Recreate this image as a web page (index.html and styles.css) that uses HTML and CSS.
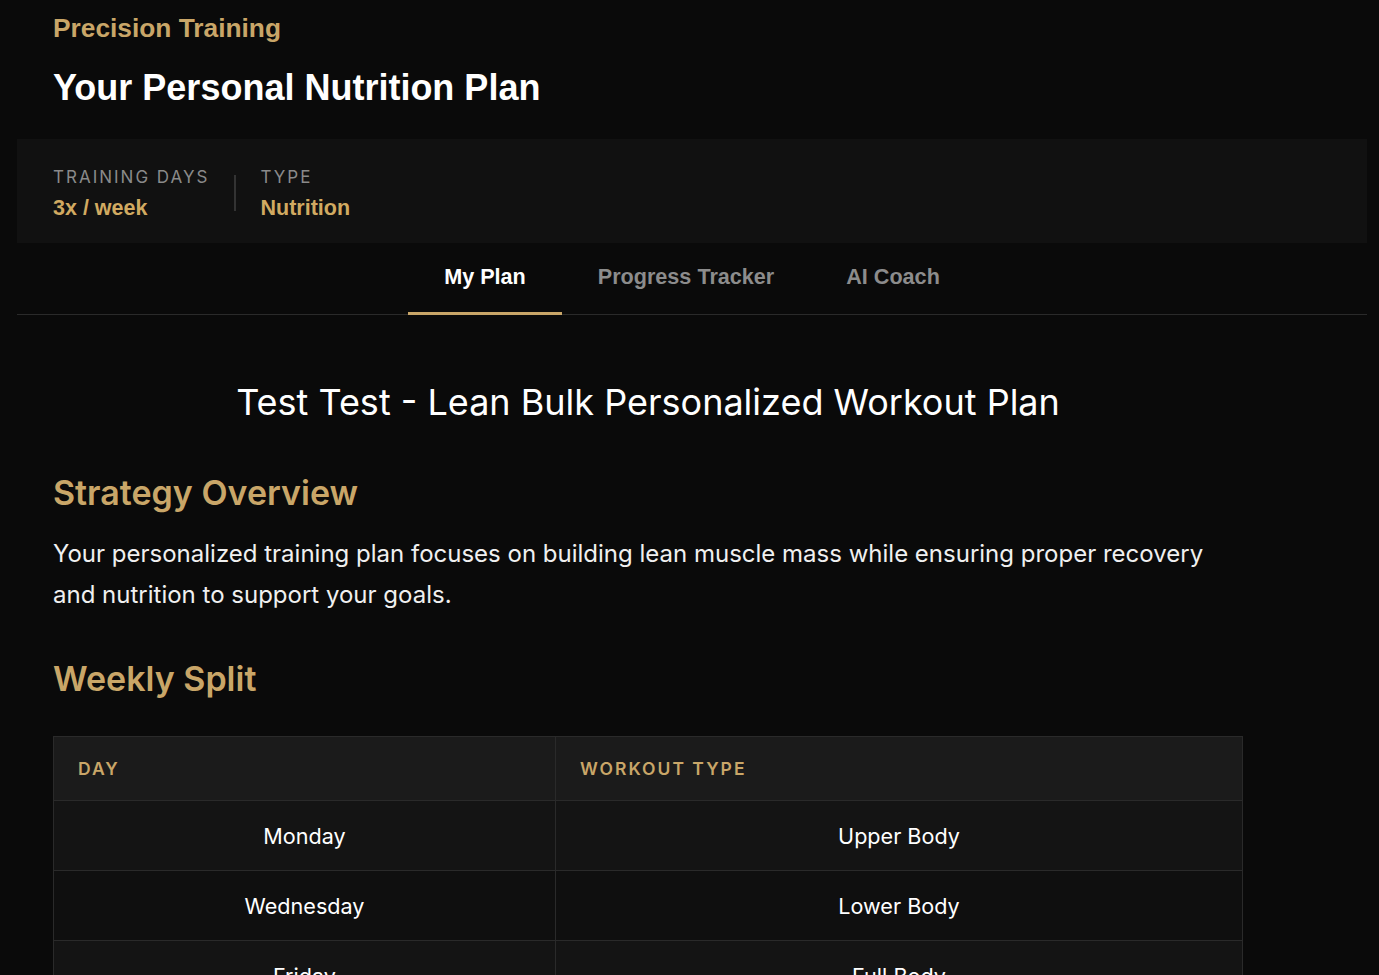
FILE: index.html
```html
<!DOCTYPE html>
<html lang="en">
<head>
<meta charset="utf-8">
<title>Your Personal Nutrition Plan</title>
<link rel="stylesheet" href="styles.css">
</head>
<body>
<div class="page">
  <header class="hero">
    <div class="eyebrow">Precision Training</div>
    <h1 class="hero-title">Your Personal Nutrition Plan</h1>
  </header>
  <section class="stats">
    <div class="stat">
      <div class="stat-label">TRAINING DAYS</div>
      <div class="stat-value">3x / week</div>
    </div>
    <div class="stat-divider"></div>
    <div class="stat">
      <div class="stat-label">TYPE</div>
      <div class="stat-value">Nutrition</div>
    </div>
  </section>
  <nav class="tabs">
    <div class="tab active">My Plan</div>
    <div class="tab">Progress Tracker</div>
    <div class="tab">AI Coach</div>
  </nav>
  <main class="content">
    <h2 class="plan-title">Test Test - Lean Bulk Personalized Workout Plan</h2>
    <h3 class="section-title">Strategy Overview</h3>
    <p class="para">Your personalized training plan focuses on building lean muscle mass while ensuring proper recovery and nutrition to support your goals.</p>
    <h3 class="section-title split">Weekly Split</h3>
    <table class="split-table">
      <thead>
        <tr><th class="col-day">DAY</th><th>WORKOUT TYPE</th></tr>
      </thead>
      <tbody>
        <tr><td>Monday</td><td>Upper Body</td></tr>
        <tr><td>Wednesday</td><td>Lower Body</td></tr>
        <tr><td>Friday</td><td>Full Body</td></tr>
      </tbody>
    </table>
  </main>
</div>
</body>
</html>
```

FILE: styles.css
```css
html, body {
  margin: 0;
  padding: 0;
  background: #0a0a0a;
}
body {
  font-family: Inter, "Noto Sans", sans-serif;
  color: #ffffff;
}
.page {
  padding: 0 12px 0 17px;
}
.hero {
  padding: 12px 36px 30px;
}
.eyebrow {
  font-family: "Liberation Sans", Arial, sans-serif;
  font-weight: 700;
  font-size: 26.3px;
  line-height: 32px;
  color: #c9a668;
}
.hero-title {
  margin: 23px 0 0;
  font-family: "Liberation Sans", Arial, sans-serif;
  font-weight: 700;
  font-size: 36px;
  line-height: 42px;
  color: #ffffff;
}
.stats {
  background: #111111;
  display: flex;
  align-items: center;
  padding: 26px 36px 22px;
  height: 56px;
}
.stat-label {
  font-size: 17px;
  letter-spacing: 2px;
  color: #8a8a8a;
  line-height: 22px;
}
.stat-value {
  font-family: "Liberation Sans", Arial, sans-serif;
  font-weight: 700;
  font-size: 21.5px;
  color: #d1aa61;
  line-height: 26px;
  margin-top: 7px;
}
.stat-divider {
  width: 2px;
  height: 36px;
  background: #333333;
  margin: 0 24px 0 25px;
}
.tabs {
  display: flex;
  justify-content: center;
  border-bottom: 1px solid #2a2a2a;
}
.tab {
  font-family: "Liberation Sans", Arial, sans-serif;
  font-weight: 700;
  font-size: 21.6px;
  color: #8c8c8c;
  padding: 21px 36px 22px;
  border-bottom: 3px solid transparent;
  margin-bottom: -1px;
}
.tab.active {
  color: #ffffff;
  border-bottom-color: #c9a668;
}
.content {
  width: 1190px;
  padding: 63px 36px 0;
}
.plan-title {
  margin: 0;
  text-align: center;
  font-weight: 400;
  font-size: 36px;
  line-height: 48px;
}
.section-title {
  margin: 45px 0 0;
  font-weight: 600;
  font-size: 34px;
  line-height: 44px;
  color: #c9a668;
}
.section-title.split {
  margin-top: 42px;
}
.para {
  margin: 18px 0 0;
  max-width: 1170px;
  font-size: 24px;
  line-height: 41px;
  color: #f0f0f0;
}
.split-table {
  margin-top: 35px;
  width: 1190px;
  border-collapse: collapse;
  border: 1px solid #2a2a2a;
}
.split-table th {
  background: #1b1b1b;
  color: #c9a668;
  font-weight: 600;
  font-size: 17.5px;
  letter-spacing: 2px;
  text-align: left;
  padding: 0 24px;
  height: 63px;
  border: 1px solid #2a2a2a;
}
.split-table th.col-day {
  width: 453px;
}
.split-table td {
  text-align: center;
  font-size: 21.6px;
  height: 69px;
  padding: 0;
  border: 1px solid #2a2a2a;
  background: #141414;
}
.split-table tbody tr:nth-child(even) td {
  background: #0f0f0f;
}
```
